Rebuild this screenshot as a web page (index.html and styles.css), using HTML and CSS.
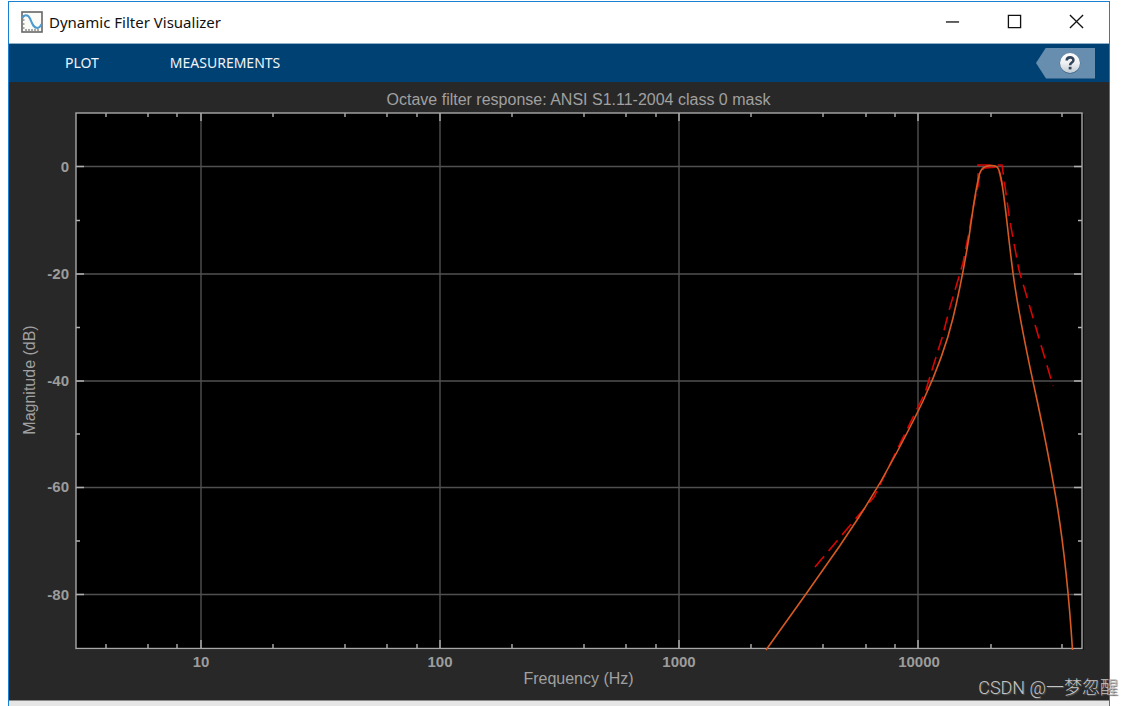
FILE: index.html
```html
<!DOCTYPE html>
<html lang="en">
<head>
<meta charset="utf-8">
<title>Dynamic Filter Visualizer</title>
<link rel="stylesheet" href="styles.css">
</head>
<body>
<main class="window">
  <header class="titlebar">
    <svg class="app-icon" viewBox="0 0 22 22" aria-hidden="true">
      <rect x="1" y="1" width="20" height="20" fill="#fbfbf8" stroke="#666" stroke-width="1.6"/>
      <path d="M5 20v-2M8 20v-2M11 20v-2M14 20v-2M17 20v-2M2 5h1.500M2 9h1.500M2 13h1.500M2 17h1.500" stroke="#555" stroke-width="1"/>
      <path d="M1.500 7C3 3.500 7 3 9 7.500S12 17 16.500 17C18.500 17 19.500 15.500 20.500 13" fill="none" stroke="#4c9bd0" stroke-width="2"/>
    </svg>
    <h1 class="app-title">Dynamic Filter Visualizer</h1>
    <div class="window-controls">
      <button class="control" type="button" aria-label="Minimize"><svg viewBox="0 0 16 16"><path d="M1 8.500h14"/></svg></button>
      <button class="control" type="button" aria-label="Maximize"><svg viewBox="0 0 16 16"><path d="M1.500 1.500h13v13h-13z"/></svg></button>
      <button class="control" type="button" aria-label="Close"><svg viewBox="0 0 16 16"><path d="M1 1l14 14M15 1L1 15"/></svg></button>
    </div>
  </header>
  <nav class="toolbar">
    <button class="tab" type="button">PLOT</button>
    <button class="tab" type="button">MEASUREMENTS</button>
    <button class="help" type="button" aria-label="Help">
      <svg viewBox="0 0 22 22" aria-hidden="true">
        <defs>
          <linearGradient id="ball" x1="0" y1="0" x2="0" y2="1"><stop offset="0" stop-color="#fff"/><stop offset="0.5" stop-color="#eef0f2"/><stop offset="1" stop-color="#c4ccd4"/></linearGradient>
        </defs>
        <circle cx="11" cy="11.500" r="10.300" fill="#3f668a"/>
        <circle cx="11" cy="11" r="10" fill="url(#ball)"/>
        <path d="M7.700 8.500C7.900 4.300 14.600 4.500 14.400 8.200C14.300 10.600 11.200 10.500 11.100 13.200" fill="none" stroke="#34465c" stroke-width="2.600"/>
        <rect x="9.700" y="14.800" width="2.800" height="2.600" fill="#34465c"/>
      </svg>
    </button>
  </nav>
  <section class="figure">
    <svg class="chart" viewBox="9 82 1100 618" role="img" aria-label="Octave filter magnitude response">
      <rect x="76" y="114" width="1008" height="536" fill="#111"/>
      <rect x="76" y="113" width="1006" height="535" fill="#000"/>
      <g class="grid">
        <path d="M201 113v535M440 113v535M679 113v535M918 113v535"/>
        <path d="M76 166.500h1006M76 274h1006M76 381h1006M76 487.500h1006M76 594.500h1006"/>
      </g>
      <g class="ticks">
        <path d="M201 113v8M440 113v8M679 113v8M918 113v8M201 648v-8M440 648v-8M679 648v-8M918 648v-8"/>
        <path d="M106 113v4M148 113v4M177 113v4M273 113v4M345 113v4M387 113v4M417 113v4M512 113v4M584 113v4M626 113v4M656 113v4M751 113v4M823 113v4M866 113v4M895 113v4M991 113v4M1062 113v4"/>
        <path d="M106 648v-4M148 648v-4M177 648v-4M273 648v-4M345 648v-4M387 648v-4M417 648v-4M512 648v-4M584 648v-4M626 648v-4M656 648v-4M751 648v-4M823 648v-4M866 648v-4M895 648v-4M991 648v-4M1062 648v-4"/>
        <path d="M76 166.500h8M76 274h8M76 381h8M76 487.500h8M76 594.500h8M1082 166.500h-8M1082 274h-8M1082 381h-8M1082 487.500h-8M1082 594.500h-8"/>
        <path d="M76 220.500h4M76 327.500h4M76 434h4M76 541h4M1082 220.500h-4M1082 327.500h-4M1082 434h-4M1082 541h-4"/>
      </g>
      <rect class="frame" x="76" y="113" width="1006" height="535.500"/>
      <polyline class="mask" points="815,567 874,497 919,405 925,393 932,370 942,338 950,307 958,280 963,263 969,232 974,203 978,185 978,165 1002,165 1010,222 1019,270 1053,386"/>
      <polyline class="mask" points="977,190 980,174 984,168 998,167 1003,188"/>
      <path class="response" d="M766 650L806 594L840 545.500L859 517C872 497 885 475 896.500 453C905 437 916 416 923.500 400C936 373 946 347 953 318C960 289 965 262 969 237C973 210 975 192 979 176C981 168 984 166 991 165.500C997 165 999 167 1001 178C1005 198 1007 227 1013 273C1018 311 1028 359 1037 400C1043 428 1049 458 1054 487C1064 542 1069 596 1072.500 650"/>
      <g class="label">
        <text x="578.500" y="105">Octave filter response: ANSI S1.11-2004 class 0 mask</text>
        <text x="578.500" y="684">Frequency (Hz)</text>
        <text transform="translate(35 380) rotate(-90)">Magnitude (dB)</text>
      </g>
      <g class="tick-label">
        <text x="201" y="667">10</text><text x="440" y="667">100</text><text x="679" y="667">1000</text><text x="919" y="667">10000</text>
      </g>
      <g class="tick-label value">
        <text x="69" y="172">0</text><text x="69" y="279">-20</text><text x="69" y="386">-40</text><text x="69" y="492">-60</text><text x="69" y="600">-80</text>
      </g>
    </svg>
  </section>
  <footer class="statusbar"></footer>
</main>
<div class="watermark">CSDN @一梦忽醒</div>
</body>
</html>
```
FILE: styles.css
```css
* { box-sizing: border-box; }
body {
  margin: 0;
  height: 100vh;
  overflow: hidden;
  background: #fff;
  font-family: "Noto Sans", "Open Sans", sans-serif;
  position: relative;
}
button {
  border: 0;
  padding: 0;
  background: none;
  color: inherit;
  font: inherit;
}
.window {
  display: flex;
  flex-direction: column;
  height: calc(100% - 1px);
  margin: 1px 23px 0 8px;
  border: solid #1a80cf;
  border-width: 1px 1px 0;
}
.titlebar {
  display: flex;
  align-items: center;
  flex: 0 0 42px;
  padding: 0 2px 2px 12px;
  border-bottom: 1px solid #8fb1cc;
  background: #fff;
  color: #111;
}
.app-icon { width: 22px; height: 22px; }
.app-title {
  margin: 0 0 0 6px;
  font-size: 15px;
  font-weight: 400;
  line-height: 20px;
}
.window-controls { display: flex; height: 100%; margin-left: auto; }
.control { display: grid; place-items: center; width: 62px; height: 100%; }
.control svg { width: 15px; height: 15px; fill: none; stroke: #111; stroke-width: 1.4; }
.toolbar {
  display: flex;
  align-items: center;
  flex: 0 0 38px;
  gap: 71px;
  padding: 0 14px 0 56px;
  background: #004174;
  color: #f0f4f8;
  font-size: 14px;
  line-height: 20px;
}
.help {
  display: grid;
  place-items: center;
  width: 59px;
  height: 31px;
  margin-left: auto;
  padding-left: 8px;
  background: #678eae;
  clip-path: polygon(10px 0, 100% 0, 100% 100%, 10px 100%, 0 50%);
}
.help svg { width: 22px; height: 22px; }
.figure { flex: 1; min-height: 0; background: #282828; }
.chart { display: block; width: 100%; height: 100%; }
.grid path { fill: none; stroke: #505050; stroke-width: 1.4; }
.ticks path { fill: none; stroke: #b0b0b0; stroke-width: 1.4; }
.frame { fill: none; stroke: #a8a8a8; stroke-width: 1.4; }
.mask { fill: none; stroke: #d80505; stroke-width: 1.6; stroke-dasharray: 14 7; }
.response { fill: none; stroke: #d65a22; stroke-width: 1.6; }
.label {
  fill: #a0a0a0;
  font-family: "Liberation Sans", Arial, sans-serif;
  font-size: 16px;
  text-anchor: middle;
}
.tick-label {
  fill: #9c9c9c;
  font-family: "Liberation Sans", Arial, sans-serif;
  font-size: 15px;
  font-weight: 700;
  text-anchor: middle;
}
.value { text-anchor: end; }
.statusbar { flex: 0 0 6px; border-top: 1px solid #8a8a8a; background: #e6e6e6; }
.watermark {
  position: absolute;
  right: 15px;
  bottom: 5px;
  color: #c4c4c4;
  font-family: Roboto, "Noto Sans CJK SC", sans-serif;
  font-size: 18px;
  font-weight: 300;
  line-height: 26px;
  text-shadow: 1px 1px 1px #555;
}
```
